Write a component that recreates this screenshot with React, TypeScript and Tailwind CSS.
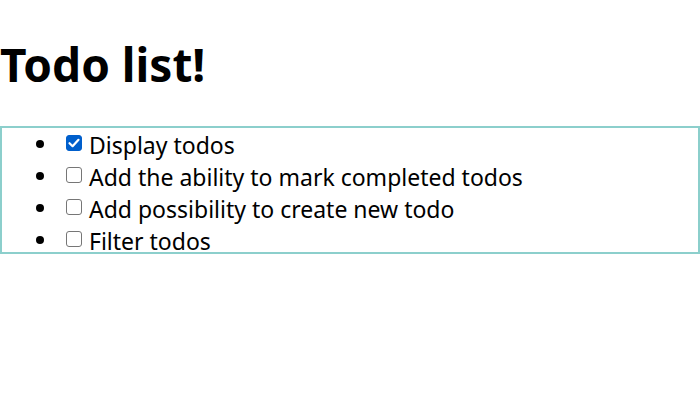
import { useState } from 'react'

const initialTodos = [
  { id: 1, title: 'Display todos', completed: true },
  { id: 2, title: 'Add the ability to mark completed todos', completed: false },
  { id: 3, title: 'Add possibility to create new todo', completed: false },
  { id: 4, title: 'Filter todos', completed: false },
]

export default function App() {
  const [todos, setTodos] = useState(initialTodos)

  const toggle = (id: number) =>
    setTodos(todos.map((t) => (t.id === id ? { ...t, completed: !t.completed } : t)))

  return (
    <div className="min-h-[415px] bg-white text-black" style={{ fontFamily: '"Noto Sans", "Open Sans", sans-serif' }}>
      <h1 className="pt-[34px] pb-[32px] text-[46px] leading-[60px] font-bold">Todo list!</h1>
      <ul className="h-[128px] border-2 border-[#8ccfcc] text-[23px]">
        {todos.map((todo) => (
          <li key={todo.id} className="flex h-[32px] items-start">
            <span className="mt-[12px] ml-[34px] h-[8px] w-[8px] shrink-0 rounded-full bg-black" />
            <label className="flex items-start">
              <span className="relative mt-[7px] ml-[22px] mr-[7px] h-4 w-4 shrink-0">
                <input
                  type="checkbox"
                  checked={todo.completed}
                  onChange={() => toggle(todo.id)}
                  className="block h-4 w-4 appearance-none rounded-[3px] border border-[#767676] bg-white checked:border-[#005fcc] checked:bg-[#005fcc]"
                />
                {todo.completed && (
                  <svg viewBox="0 0 16 16" className="pointer-events-none absolute inset-0 h-4 w-4">
                    <path d="M3.5 8.2 L6.6 11.2 L12.5 4.8" fill="none" stroke="white" strokeWidth="2.2" strokeLinecap="round" strokeLinejoin="round" />
                  </svg>
                )}
              </span>
              <span className="leading-[34px] whitespace-nowrap">{todo.title}</span>
            </label>
          </li>
        ))}
      </ul>
    </div>
  )
}
